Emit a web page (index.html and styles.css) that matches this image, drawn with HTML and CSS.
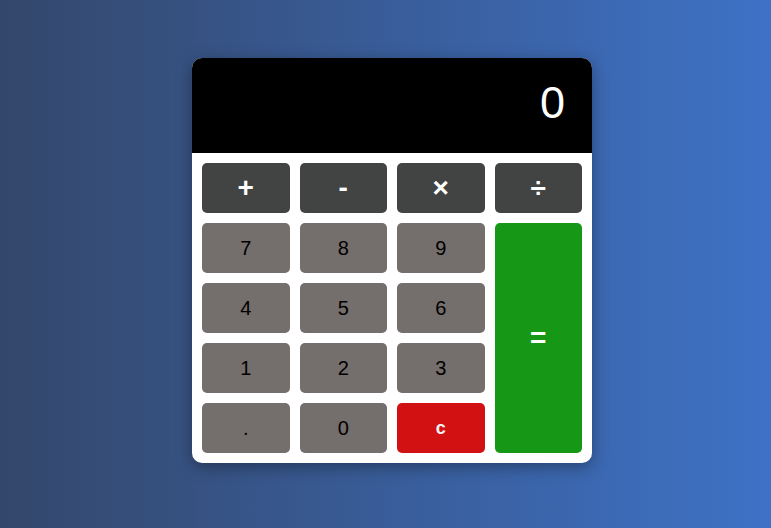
FILE: index.html
```html
<!DOCTYPE html>
<html>
<head>
<meta charset="utf-8">
<link rel="stylesheet" href="styles.css">
</head>
<body>
<div class="calc">
  <div class="display">0</div>
  <div class="keys">
    <button class="key op">+</button>
    <button class="key op">-</button>
    <button class="key op">×</button>
    <button class="key op">÷</button>
    <button class="key num">7</button>
    <button class="key num">8</button>
    <button class="key num">9</button>
    <button class="key eq">=</button>
    <button class="key num">4</button>
    <button class="key num">5</button>
    <button class="key num">6</button>
    <button class="key num">1</button>
    <button class="key num">2</button>
    <button class="key num">3</button>
    <button class="key num">.</button>
    <button class="key num">0</button>
    <button class="key clear">c</button>
  </div>
</div>
</body>
</html>
```
FILE: styles.css
```css
html, body {
  margin: 0;
  height: 100%;
}
body {
  background: linear-gradient(to right, #34476b, #3e72c6);
  font-family: "Liberation Sans", Arial, sans-serif;
  display: flex;
  justify-content: center;
  align-items: flex-start;
  padding-left: 13px;
  box-sizing: border-box;
}
.calc {
  margin-top: 58px;
  width: 400px;
  background: #fff;
  border-radius: 10px;
  overflow: hidden;
  box-shadow: 0 4px 16px rgba(0, 0, 0, 0.35);
}
.display {
  background: #000;
  color: #fff;
  height: 95px;
  box-sizing: border-box;
  padding: 0 27px 0 20px;
  font-size: 45px;
  line-height: 89px;
  text-align: right;
}
.keys {
  display: grid;
  grid-template-columns: repeat(4, 1fr);
  grid-auto-rows: 50px;
  gap: 10px;
  padding: 10px;
}
.key {
  border: none;
  border-radius: 5px;
  font-family: "Liberation Sans", Arial, sans-serif;
  padding: 0;
  margin: 0;
}
.op {
  background: #424443;
  color: #fff;
  font-size: 28px;
  font-weight: bold;
}
.num {
  background: #746e6d;
  color: #000;
  font-size: 20px;
}
.eq {
  grid-column: 4;
  grid-row: 2 / span 4;
  background: #169816;
  color: #fff;
  font-size: 28px;
  font-weight: bold;
}
.clear {
  background: #d21212;
  color: #f2f2f2;
  font-size: 18px;
  font-weight: bold;
}
```
